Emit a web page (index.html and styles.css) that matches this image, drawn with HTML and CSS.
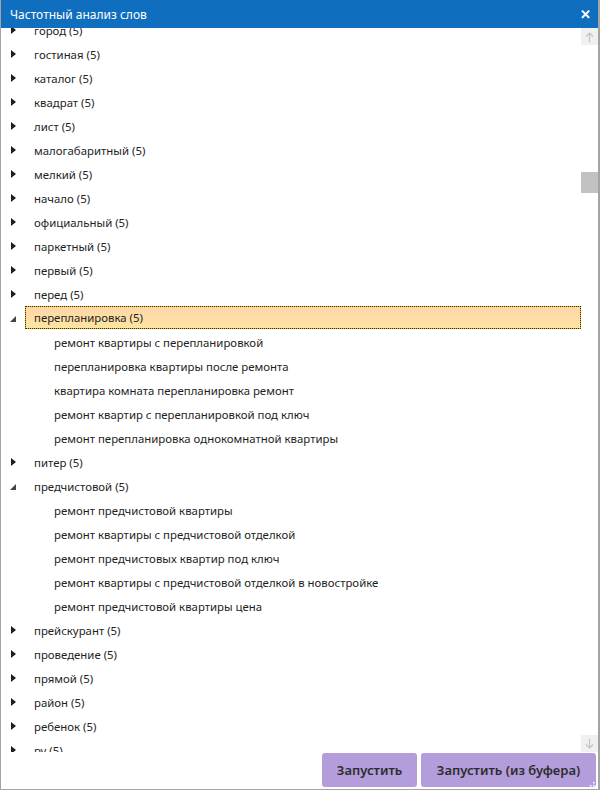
FILE: index.html
```html
<!DOCTYPE html>
<html lang="ru">
  <head>
    <meta charset="UTF-8" />
    <title>Частотный анализ слов</title>
    <link rel="stylesheet" href="styles.css">
  </head>
  <body>
    <div class="window">
      <div class="title-bar">
        <span class="title">Частотный анализ слов</span>
        <span class="close">&#x2715;</span>
      </div>

      <div class="content">
        <div class="tree">
          <div class="tree-inner">
            <div class="node"><span class="toggle"><i class="arrow"></i></span><span class="label">город (5)</span></div>
            <div class="node"><span class="toggle"><i class="arrow"></i></span><span class="label">гостиная (5)</span></div>
            <div class="node"><span class="toggle"><i class="arrow"></i></span><span class="label">каталог (5)</span></div>
            <div class="node"><span class="toggle"><i class="arrow"></i></span><span class="label">квадрат (5)</span></div>
            <div class="node"><span class="toggle"><i class="arrow"></i></span><span class="label">лист (5)</span></div>
            <div class="node"><span class="toggle"><i class="arrow"></i></span><span class="label">малогабаритный (5)</span></div>
            <div class="node"><span class="toggle"><i class="arrow"></i></span><span class="label">мелкий (5)</span></div>
            <div class="node"><span class="toggle"><i class="arrow"></i></span><span class="label">начало (5)</span></div>
            <div class="node"><span class="toggle"><i class="arrow"></i></span><span class="label">официальный (5)</span></div>
            <div class="node"><span class="toggle"><i class="arrow"></i></span><span class="label">паркетный (5)</span></div>
            <div class="node"><span class="toggle"><i class="arrow"></i></span><span class="label">первый (5)</span></div>
            <div class="node"><span class="toggle"><i class="arrow"></i></span><span class="label">перед (5)</span></div>
            <div class="node expanded"><span class="toggle"><i class="arrow"></i></span><span class="label selected">перепланировка (5)</span></div>
            <div class="leaf">ремонт квартиры с перепланировкой</div>
            <div class="leaf">перепланировка квартиры после ремонта</div>
            <div class="leaf">квартира комната перепланировка ремонт</div>
            <div class="leaf">ремонт квартир с перепланировкой под ключ</div>
            <div class="leaf">ремонт перепланировка однокомнатной квартиры</div>
            <div class="node"><span class="toggle"><i class="arrow"></i></span><span class="label">питер (5)</span></div>
            <div class="node expanded"><span class="toggle"><i class="arrow"></i></span><span class="label">предчистовой (5)</span></div>
            <div class="leaf">ремонт предчистовой квартиры</div>
            <div class="leaf">ремонт квартиры с предчистовой отделкой</div>
            <div class="leaf">ремонт предчистовых квартир под ключ</div>
            <div class="leaf">ремонт квартиры с предчистовой отделкой в новостройке</div>
            <div class="leaf">ремонт предчистовой квартиры цена</div>
            <div class="node"><span class="toggle"><i class="arrow"></i></span><span class="label">прейскурант (5)</span></div>
            <div class="node"><span class="toggle"><i class="arrow"></i></span><span class="label">проведение (5)</span></div>
            <div class="node"><span class="toggle"><i class="arrow"></i></span><span class="label">прямой (5)</span></div>
            <div class="node"><span class="toggle"><i class="arrow"></i></span><span class="label">район (5)</span></div>
            <div class="node"><span class="toggle"><i class="arrow"></i></span><span class="label">ребенок (5)</span></div>
            <div class="node"><span class="toggle"><i class="arrow"></i></span><span class="label">ру (5)</span></div>
          </div>
        </div>

        <div class="scrollbar">
          <div class="scroll-btn">
            <svg width="9" height="10" viewBox="0 0 9 10"><path d="M4.5 1v9M1 4.5l3.5-3.5 3.5 3.5" fill="none" stroke="#c2c2c2" stroke-width="1.2"/></svg>
          </div>
          <div class="scroll-track"><div class="scroll-thumb"></div></div>
          <div class="scroll-btn">
            <svg width="9" height="10" viewBox="0 0 9 10"><path d="M4.5 0v9M1 5.5l3.5 3.5 3.5-3.5" fill="none" stroke="#c2c2c2" stroke-width="1.2"/></svg>
          </div>
        </div>
      </div>

      <div class="footer">
        <button class="run-btn">Запустить</button>
        <button class="run-btn wide">Запустить (из буфера)</button>
        <svg class="grip" width="10" height="10" viewBox="0 0 10 10">
          <g fill="#ffffff">
            <rect x="8" y="0" width="1.5" height="1.5"/>
            <rect x="5" y="3" width="1.5" height="1.5"/><rect x="8" y="3" width="1.5" height="1.5"/>
            <rect x="2" y="6" width="1.5" height="1.5"/><rect x="5" y="6" width="1.5" height="1.5"/><rect x="8" y="6" width="1.5" height="1.5"/>
          </g>
        </svg>
      </div>
    </div>
  </body>
</html>
```

FILE: styles.css
```css
body {
  margin: 0;
  font-family: "Noto Sans", "Open Sans", sans-serif;
  background: #ffffff;
  color: #1e1e1e;
}
.window {
  position: relative;
  width: 600px;
  height: 790px;
  box-sizing: border-box;
  border: 1px solid #a4a4a4;
  border-top: none;
  border-right-width: 2px;
  display: flex;
  flex-direction: column;
  overflow: hidden;
}
/* Заголовок окна */
.title-bar {
  height: 28px;
  margin: 0 -2px 0 -1px;
  background: #106ebe;
  color: #ffffff;
  display: flex;
  align-items: center;
  justify-content: space-between;
  padding: 0 9px 0 10px;
  flex-shrink: 0;
}
.title {
  font-size: 12px;
}
.close {
  font-size: 13px;
  font-weight: bold;
}
.content {
  flex: 1;
  display: flex;
  min-height: 0;
}
/* Дерево слов */
.tree {
  flex: 1;
  overflow: hidden;
}
.tree-inner {
  margin-top: -10px;
}
.node,
.leaf {
  height: 24px;
  display: flex;
  align-items: center;
  font-size: 11.4px;
  white-space: nowrap;
}
.leaf {
  padding-left: 53px;
}
.toggle {
  width: 24px;
  height: 24px;
  display: flex;
  align-items: center;
  flex-shrink: 0;
}
.arrow {
  margin-left: 10px;
  width: 0;
  height: 0;
  border-top: 4.5px solid transparent;
  border-bottom: 4.5px solid transparent;
  border-left: 5px solid #1e1e1e;
}
.expanded .arrow {
  margin-left: 9px;
  margin-top: 2px;
  border-top: none;
  border-left: 6px solid transparent;
  border-bottom: 6px solid #444444;
}
.label {
  flex: 1;
  height: 24px;
  box-sizing: border-box;
  display: flex;
  align-items: center;
  padding-left: 8px;
  border: 1px solid transparent;
}
.label.selected {
  height: 23px;
  margin-bottom: 1px;
  border: 1px dotted #2b2b2b;
  background: linear-gradient(#ffd6a8, #fde5a2) padding-box, #eebc00 border-box;
}
/* Полоса прокрутки */
.scrollbar {
  width: 17px;
  display: flex;
  flex-direction: column;
  flex-shrink: 0;
}
.scroll-btn {
  height: 17px;
  background: #f0f0f0;
  display: flex;
  align-items: center;
  justify-content: center;
}
.scroll-track {
  flex: 1;
}
.scroll-thumb {
  margin-top: 127px;
  height: 21px;
  background: #c2c2c2;
}
/* Кнопки внизу */
.footer {
  height: 36px;
  flex-shrink: 0;
  display: flex;
  justify-content: flex-end;
  align-items: flex-start;
  gap: 4px;
  padding: 1px 2px 0 0;
}
.run-btn {
  height: 34px;
  border: none;
  border-radius: 3px;
  background: #b39ddb;
  color: #2d2d2d;
  font-family: "Noto Sans", "Open Sans", sans-serif;
  font-size: 13px;
  font-weight: 600;
  width: 95px;
  padding: 0;
}
.run-btn.wide {
  width: 175px;
}
.grip {
  position: absolute;
  right: 0;
  bottom: 0;
}
```
